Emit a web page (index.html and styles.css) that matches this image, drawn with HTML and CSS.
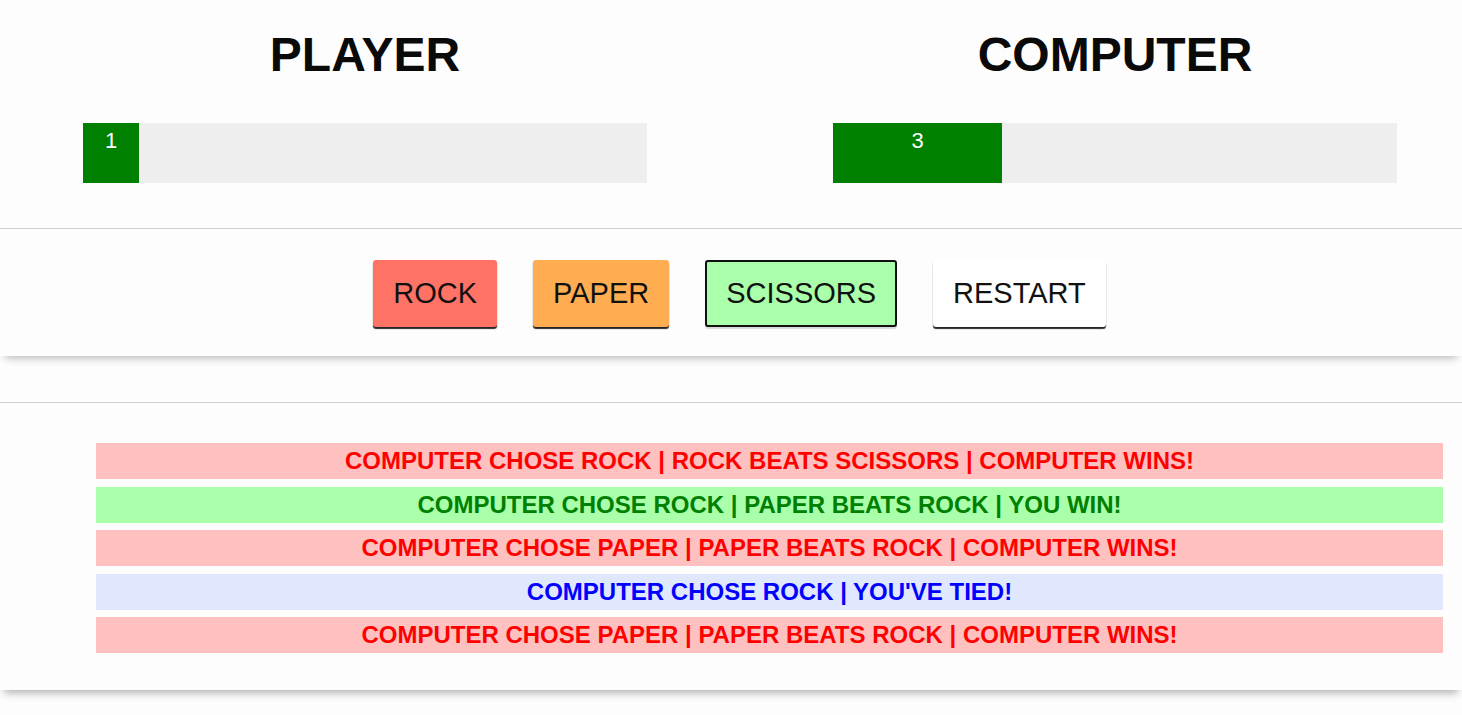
FILE: index.html
```html
<!DOCTYPE html>
<html>
<head>
<meta charset="utf-8">
<title>Rock Paper Scissors</title>
<link rel="stylesheet" href="styles.css">
</head>
<body>
<header class="scoreboard">
  <div class="side">
    <h1 class="side-title">PLAYER</h1>
    <div class="bar"><div class="bar-fill" style="width:10%">1</div></div>
  </div>
  <div class="side">
    <h1 class="side-title">COMPUTER</h1>
    <div class="bar"><div class="bar-fill" style="width:30%">3</div></div>
  </div>
</header>
<section class="controls">
  <button class="btn btn-rock">ROCK</button>
  <button class="btn btn-paper">PAPER</button>
  <button class="btn btn-scissors is-selected">SCISSORS</button>
  <button class="btn btn-restart">RESTART</button>
</section>
<section class="log">
  <ul class="log-list">
    <li class="log-item lose">COMPUTER CHOSE ROCK | ROCK BEATS SCISSORS | COMPUTER WINS!</li>
    <li class="log-item win">COMPUTER CHOSE ROCK | PAPER BEATS ROCK | YOU WIN!</li>
    <li class="log-item lose">COMPUTER CHOSE PAPER | PAPER BEATS ROCK | COMPUTER WINS!</li>
    <li class="log-item tie">COMPUTER CHOSE ROCK | YOU'VE TIED!</li>
    <li class="log-item lose">COMPUTER CHOSE PAPER | PAPER BEATS ROCK | COMPUTER WINS!</li>
  </ul>
</section>
</body>
</html>
```

FILE: styles.css
```css
html, body {
  margin: 0;
  padding: 0;
}
body {
  background: #fdfdfd;
  font-family: "Liberation Sans", Arial, sans-serif;
  color: #000;
  min-height: 715px;
}
.scoreboard {
  display: flex;
  gap: 186px;
  padding: 0 65px 45px 83px;
}
.side {
  width: 564px;
  display: flex;
  flex-direction: column;
  align-items: stretch;
}
.side-title {
  margin: 27px 0 0;
  text-align: center;
  font-size: 48px;
  font-weight: bold;
  line-height: 56px;
  color: #0a0a0a;
}
.bar {
  margin-top: 40px;
  height: 60px;
  background: #eeeeee;
  display: flex;
}
.bar-fill {
  background: #008000;
  color: #fff;
  font-size: 22px;
  text-align: center;
  padding-top: 5px;
  box-sizing: border-box;
}
.controls {
  border-top: 1px solid #d0d0d0;
  background: #fdfdfd;
  display: flex;
  justify-content: center;
  gap: 36px;
  padding: 31px 0 29px 17px;
  box-shadow: 0 7px 8px -5px rgba(0,0,0,0.28);
  position: relative;
  z-index: 1;
}
.btn {
  font-family: "Liberation Sans", Arial, sans-serif;
  font-size: 29px;
  color: #111;
  height: 67px;
  padding: 0 19px;
  border: 1px solid transparent;
  border-radius: 3px;
  box-shadow: 0 2px 1px rgba(0,0,0,0.85);
  cursor: pointer;
}
.btn-rock { background: #ff7366; }
.btn-paper { background: #ffad50; }
.btn-scissors { background: #aaffaa; }
.btn-restart { background: #ffffff; }
.btn.is-selected {
  border: 2px solid #111;
  box-shadow: 0 2px 1px rgba(0,0,0,0.15);
}
.log {
  margin-top: 46px;
  border-top: 1px solid #d0d0d0;
  background: #fdfdfd;
  padding: 40px 19px 37px 96px;
  box-shadow: 0 7px 8px -4px rgba(0,0,0,0.3);
  position: relative;
  z-index: 1;
}
.log-list {
  list-style: none;
  margin: 0;
  padding: 0;
  display: flex;
  flex-direction: column;
  gap: 7.5px;
}
.log-item {
  height: 36px;
  line-height: 36px;
  text-align: center;
  font-weight: bold;
  font-size: 24px;
}
.log-item.lose { background: #ffc0c0; color: #ff0000; }
.log-item.win { background: #aaffaa; color: #008000; }
.log-item.tie { background: #e0e8ff; color: #0000ff; }
```
